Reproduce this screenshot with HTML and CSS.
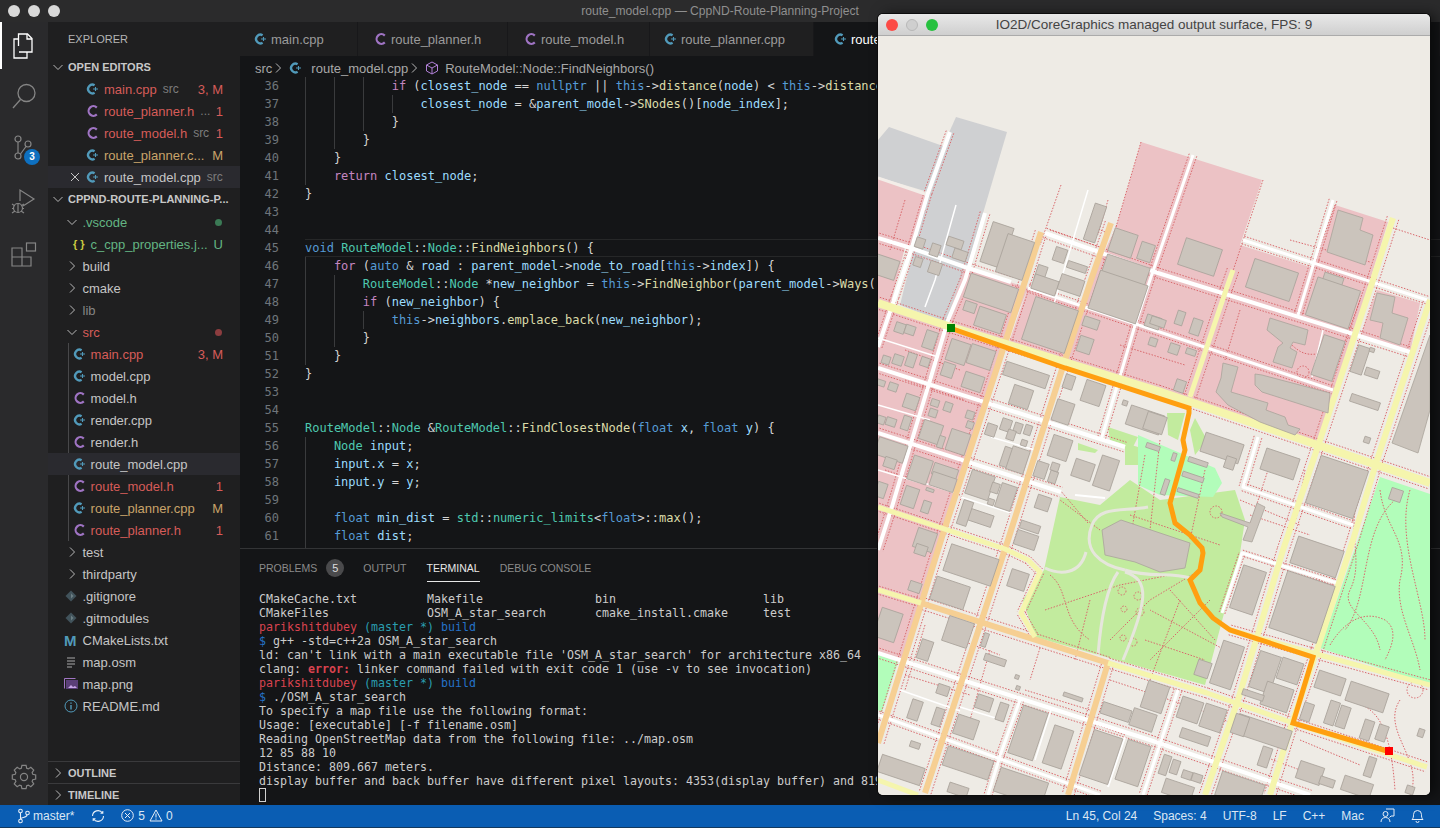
FILE: index.html
```html
<!DOCTYPE html>
<html lang="en">
<head>
  <meta charset="UTF-8">
  <title>route_model.cpp — CppND-Route-Planning-Project</title>
  <link rel="stylesheet" href="styles.css">
</head>
<body>

  <svg class="defs" width="0" height="0">
    <symbol id="i-cpp" viewBox="0 0 14 14">
      <path d="M8.6 3.3A4.3 4.3 0 1 0 8.6 10.7" fill="none" stroke="#519aba" stroke-width="2.4"/>
      <path d="M7 7h5M9.5 5v4" stroke="#519aba" stroke-width="1.1"/>
    </symbol>
    <symbol id="i-h" viewBox="0 0 14 14">
      <path d="M10.8 3.6A4.8 4.8 0 1 0 10.8 10.4" fill="none" stroke="#a074c4" stroke-width="2.2"/>
    </symbol>
    <symbol id="i-git" viewBox="0 0 14 14">
      <path d="M7 1.5 12.5 7 7 12.5 1.5 7Z" fill="#41535b"/>
      <path d="M7 4.5 9.5 7 7 9.5Z" fill="#6d8086"/>
    </symbol>
    <symbol id="i-open" viewBox="0 0 12 12">
      <path d="M1.5 4 6 8.5 10.5 4" fill="none" stroke="#b8b8b8" stroke-width="1"/>
    </symbol>
    <symbol id="i-shut" viewBox="0 0 12 12">
      <path d="M4 1.5 8.5 6 4 10.5" fill="none" stroke="#b8b8b8" stroke-width="1"/>
    </symbol>
  </svg>

  <div class="titlebar">
    <span class="light"></span><span class="light"></span><span class="light"></span>
    <div class="title">route_model.cpp — CppND-Route-Planning-Project</div>
  </div>

  <div class="workbench">

    <nav class="activity">
      <div class="act act-active">
        <svg width="24" height="26" viewBox="0 0 24 26" fill="none" stroke="#fff" stroke-width="1.3"><path d="M6.5 13V1h9l4.5 4.5V19H7"/><path d="M15 1v5h5"/><path d="M6.5 6H2v19h13v-6"/></svg>
      </div>
      <div class="act">
        <svg width="26" height="26" viewBox="0 0 26 26" fill="none" stroke="#858585" stroke-width="1.3"><circle cx="15.5" cy="10" r="8.5"/><path d="M9.5 16.5 2 25"/></svg>
      </div>
      <div class="act">
        <svg width="26" height="28" viewBox="0 0 26 28" fill="none" stroke="#858585" stroke-width="1.2"><circle cx="7" cy="4" r="3"/><circle cx="7" cy="21" r="3"/><circle cx="17" cy="9" r="3"/><path d="M7 7v11M15 11.5 9.5 19"/></svg>
        <span class="act-badge">3</span>
      </div>
      <div class="act">
        <svg width="28" height="28" viewBox="0 0 28 28" fill="none" stroke="#858585" stroke-width="1.2"><path d="M10 13V2l14 9-11 7"/><circle cx="8" cy="20" r="4.5"/><path d="M8 15.500v9M2 16l3 2M2 20.500h2M2 25l3-2M14 16l-3 2M14 20.500h-2M14 25l-3-2"/></svg>
      </div>
      <div class="act">
        <svg width="26" height="26" viewBox="0 0 26 26" fill="none" stroke="#858585" stroke-width="1.2"><rect x="15.500" y="1" width="9" height="8"/><path d="M1 6h10v18H1ZM1 15h19v9h-9"/></svg>
      </div>
      <div class="act act-gear">
        <svg width="26" height="26" viewBox="0 0 24 24" fill="none" stroke="#858585" stroke-width="1.1"><path d="M10.100 1.200H13.900L14.500 3.900 16 4.500 18.300 3 21 5.700 19.500 8 20.100 9.500 22.800 10.100V13.900L20.100 14.500 19.500 16 21 18.300 18.300 21 16 19.500 14.500 20.100 13.900 22.800H10.100L9.500 20.100 8 19.500 5.700 21 3 18.300 4.500 16 3.900 14.500 1.200 13.900V10.100L3.900 9.500 4.500 8 3 5.700 5.700 3 8 4.500 9.500 3.900Z"/><circle cx="12" cy="12" r="3.300"/></svg>
      </div>
    </nav>

    <aside class="sidebar">
      <div class="explorer-head">EXPLORER</div>
      <div class="tree">
        <div class="row section"><svg class="arrow"><use href="#i-open"/></svg>OPEN EDITORS</div>

        <div class="row open-row c-err"><span class="slot"></span><svg class="ico"><use href="#i-cpp"/></svg><span class="name">main.cpp</span><span class="hint">src</span><span class="mark">3, M</span></div>
        <div class="row open-row c-err"><span class="slot"></span><svg class="ico"><use href="#i-h"/></svg><span class="name">route_planner.h</span><span class="hint">...</span><span class="mark">1</span></div>
        <div class="row open-row c-err"><span class="slot"></span><svg class="ico"><use href="#i-h"/></svg><span class="name">route_model.h</span><span class="hint">src</span><span class="mark">1</span></div>
        <div class="row open-row c-mod"><span class="slot"></span><svg class="ico"><use href="#i-cpp"/></svg><span class="name">route_planner.c...</span><span class="mark">M</span></div>
        <div class="row open-row is-selected"><span class="slot"><svg width="12" height="12" viewBox="0 0 12 12" stroke="#c5c5c5" stroke-width="1"><path d="M2 2l8 8M10 2l-8 8"/></svg></span><svg class="ico"><use href="#i-cpp"/></svg><span class="name">route_model.cpp</span><span class="hint">src</span></div>

        <div class="row section"><svg class="arrow"><use href="#i-open"/></svg>CPPND-ROUTE-PLANNING-P...</div>

        <div class="row folder c-new"><svg class="arrow"><use href="#i-open"/></svg><span class="name">.vscode</span><span class="dot dot-new"></span></div>
        <div class="row nested c-new"><span class="ic-json">{ }</span><span class="name">c_cpp_properties.j...</span><span class="mark">U</span></div>
        <div class="row folder"><svg class="arrow"><use href="#i-shut"/></svg><span class="name">build</span></div>
        <div class="row folder"><svg class="arrow"><use href="#i-shut"/></svg><span class="name">cmake</span></div>
        <div class="row folder c-dim"><svg class="arrow"><use href="#i-shut"/></svg><span class="name">lib</span></div>
        <div class="row folder c-err"><svg class="arrow"><use href="#i-open"/></svg><span class="name">src</span><span class="dot dot-err"></span></div>

        <div class="src-group">
          <div class="row nested c-err"><svg class="ico"><use href="#i-cpp"/></svg><span class="name">main.cpp</span><span class="mark">3, M</span></div>
          <div class="row nested"><svg class="ico"><use href="#i-cpp"/></svg><span class="name">model.cpp</span></div>
          <div class="row nested"><svg class="ico"><use href="#i-h"/></svg><span class="name">model.h</span></div>
          <div class="row nested"><svg class="ico"><use href="#i-cpp"/></svg><span class="name">render.cpp</span></div>
          <div class="row nested"><svg class="ico"><use href="#i-h"/></svg><span class="name">render.h</span></div>
          <div class="row nested is-selected"><svg class="ico"><use href="#i-cpp"/></svg><span class="name">route_model.cpp</span></div>
          <div class="row nested c-err"><svg class="ico"><use href="#i-h"/></svg><span class="name">route_model.h</span><span class="mark">1</span></div>
          <div class="row nested c-mod"><svg class="ico"><use href="#i-cpp"/></svg><span class="name">route_planner.cpp</span><span class="mark">M</span></div>
          <div class="row nested c-err"><svg class="ico"><use href="#i-h"/></svg><span class="name">route_planner.h</span><span class="mark">1</span></div>
        </div>

        <div class="row folder"><svg class="arrow"><use href="#i-shut"/></svg><span class="name">test</span></div>
        <div class="row folder"><svg class="arrow"><use href="#i-shut"/></svg><span class="name">thirdparty</span></div>
        <div class="row plain"><svg class="ico"><use href="#i-git"/></svg><span class="name">.gitignore</span></div>
        <div class="row plain"><svg class="ico"><use href="#i-git"/></svg><span class="name">.gitmodules</span></div>
        <div class="row plain"><span class="ic-m">M</span><span class="name">CMakeLists.txt</span></div>
        <div class="row plain"><svg class="ico" viewBox="0 0 14 14" stroke="#a9a9a9" stroke-width="1.1"><path d="M3 3h8M3 6h8M3 9h8M3 12h5"/></svg><span class="name">map.osm</span></div>
        <div class="row plain"><svg class="ico" viewBox="0 0 14 14"><rect x="2" y="3" width="12" height="9" fill="#5b3f78"/><path d="M0.500 1.500h11M0.500 1.500v10" stroke="#a074c4" fill="none"/><path d="M4 11l3-3 2 2 2-1 2 2z" fill="#c9a7e8"/></svg><span class="name">map.png</span></div>
        <div class="row plain"><svg class="ico" viewBox="0 0 14 14" fill="none" stroke="#519aba" stroke-width="1"><circle cx="7" cy="7" r="6"/><path d="M7 6v4.500M7 3.500v1.200" stroke-width="1.400"/></svg><span class="name">README.md</span></div>
      </div>
      <div class="row section section-foot"><svg class="arrow"><use href="#i-shut"/></svg>OUTLINE</div>
      <div class="row section section-foot"><svg class="arrow"><use href="#i-shut"/></svg>TIMELINE</div>
    </aside>

    <main class="content">
      <div class="tabs">
        <div class="tab tab-main"><svg class="ico"><use href="#i-cpp"/></svg>main.cpp</div>
        <div class="tab tab-planner-h"><svg class="ico"><use href="#i-h"/></svg>route_planner.h</div>
        <div class="tab tab-model-h"><svg class="ico"><use href="#i-h"/></svg>route_model.h</div>
        <div class="tab tab-planner-c"><svg class="ico"><use href="#i-cpp"/></svg>route_planner.cpp</div>
        <div class="tab tab-active"><svg class="ico"><use href="#i-cpp"/></svg>route_model.cpp</div>
      </div>

      <div class="crumbs">
        <span>src</span><svg class="crumb-sep"><use href="#i-shut"/></svg>
        <svg class="ico"><use href="#i-cpp"/></svg><span class="crumb-file">route_model.cpp</span><svg class="crumb-sep"><use href="#i-shut"/></svg>
        <svg class="ico" viewBox="0 0 14 14" fill="none" stroke="#b180d7" stroke-width="1"><path d="M7 1l5.500 3v6L7 13l-5.500-3V4ZM1.500 4 7 7l5.500-3M7 7v6"/></svg><span>RouteModel::Node::FindNeighbors()</span>
      </div>

      <div class="editor">
        <div class="ln"><span class="no">36</span><span class="code"><i class="g"></i><i class="g"></i><i class="g"></i><span class="k">if</span> (<span class="v">closest_node</span> == <span class="b">nullptr</span> || <span class="b">this</span>-&gt;<span class="f">distance</span>(<span class="v">node</span>) &lt; <span class="b">this</span>-&gt;<span class="f">distance</span></span></div>
        <div class="ln"><span class="no">37</span><span class="code"><i class="g"></i><i class="g"></i><i class="g"></i><i class="g"></i><span class="v">closest_node</span> = &amp;<span class="v">parent_model</span>-&gt;<span class="f">SNodes</span>()[<span class="v">node_index</span>];</span></div>
        <div class="ln"><span class="no">38</span><span class="code"><i class="g"></i><i class="g"></i><i class="g"></i>}</span></div>
        <div class="ln"><span class="no">39</span><span class="code"><i class="g"></i><i class="g"></i>}</span></div>
        <div class="ln"><span class="no">40</span><span class="code"><i class="g"></i>}</span></div>
        <div class="ln"><span class="no">41</span><span class="code"><i class="g"></i><span class="k">return</span> <span class="v">closest_node</span>;</span></div>
        <div class="ln"><span class="no">42</span><span class="code">}</span></div>
        <div class="ln"><span class="no">43</span><span class="code"></span></div>
        <div class="ln"><span class="no">44</span><span class="code"></span></div>
        <div class="ln is-current"><span class="no">45</span><span class="code"><span class="b">void</span> <span class="t">RouteModel</span>::<span class="t">Node</span>::<span class="f">FindNeighbors</span>() {</span></div>
        <div class="ln"><span class="no">46</span><span class="code"><i class="g"></i><span class="k">for</span> (<span class="b">auto</span> &amp; <span class="v">road</span> : <span class="v">parent_model</span>-&gt;<span class="v">node_to_road</span>[<span class="b">this</span>-&gt;<span class="v">index</span>]) {</span></div>
        <div class="ln"><span class="no">47</span><span class="code"><i class="g"></i><i class="g"></i><span class="t">RouteModel</span>::<span class="t">Node</span> *<span class="v">new_neighbor</span> = <span class="b">this</span>-&gt;<span class="f">FindNeighbor</span>(<span class="v">parent_model</span>-&gt;<span class="f">Ways</span>(</span></div>
        <div class="ln"><span class="no">48</span><span class="code"><i class="g"></i><i class="g"></i><span class="k">if</span> (<span class="v">new_neighbor</span>) {</span></div>
        <div class="ln"><span class="no">49</span><span class="code"><i class="g"></i><i class="g"></i><i class="g"></i><span class="b">this</span>-&gt;<span class="v">neighbors</span>.<span class="f">emplace_back</span>(<span class="v">new_neighbor</span>);</span></div>
        <div class="ln"><span class="no">50</span><span class="code"><i class="g"></i><i class="g"></i>}</span></div>
        <div class="ln"><span class="no">51</span><span class="code"><i class="g"></i>}</span></div>
        <div class="ln"><span class="no">52</span><span class="code">}</span></div>
        <div class="ln"><span class="no">53</span><span class="code"></span></div>
        <div class="ln"><span class="no">54</span><span class="code"></span></div>
        <div class="ln"><span class="no">55</span><span class="code"><span class="t">RouteModel</span>::<span class="t">Node</span> &amp;<span class="t">RouteModel</span>::<span class="f">FindClosestNode</span>(<span class="b">float</span> <span class="v">x</span>, <span class="b">float</span> <span class="v">y</span>) {</span></div>
        <div class="ln"><span class="no">56</span><span class="code"><i class="g"></i><span class="t">Node</span> <span class="v">input</span>;</span></div>
        <div class="ln"><span class="no">57</span><span class="code"><i class="g"></i><span class="v">input</span>.<span class="v">x</span> = <span class="v">x</span>;</span></div>
        <div class="ln"><span class="no">58</span><span class="code"><i class="g"></i><span class="v">input</span>.<span class="v">y</span> = <span class="v">y</span>;</span></div>
        <div class="ln"><span class="no">59</span><span class="code"><i class="g"></i></span></div>
        <div class="ln"><span class="no">60</span><span class="code"><i class="g"></i><span class="b">float</span> <span class="v">min_dist</span> = <span class="t">std</span>::<span class="t">numeric_limits</span>&lt;<span class="b">float</span>&gt;::<span class="f">max</span>();</span></div>
        <div class="ln"><span class="no">61</span><span class="code"><i class="g"></i><span class="b">float</span> <span class="v">dist</span>;</span></div>
        <div class="ln"><span class="no">62</span><span class="code"><i class="g"></i><span class="b">int</span> <span class="v">closest_idx</span>;</span></div>
      </div>

      <section class="panel">
        <div class="panel-tabs">
          <span class="ptab">PROBLEMS</span><span class="count">5</span>
          <span class="ptab">OUTPUT</span>
          <span class="ptab ptab-active">TERMINAL</span>
          <span class="ptab">DEBUG CONSOLE</span>
        </div>
<pre class="terminal">CMakeCache.txt          Makefile                bin                     lib
CMakeFiles              OSM_A_star_search       cmake_install.cmake     test
<span class="t-red">parikshitdubey</span> <span class="t-cyan">(master *)</span> <span class="t-blue">build</span>
<span class="t-blue">$</span> g++ -std=c++2a OSM_A_star_search
ld: can't link with a main executable file 'OSM_A_star_search' for architecture x86_64
clang: <span class="t-err">error:</span> linker command failed with exit code 1 (use -v to see invocation)
<span class="t-red">parikshitdubey</span> <span class="t-cyan">(master *)</span> <span class="t-blue">build</span>
<span class="t-blue">$</span> ./OSM_A_star_search
To specify a map file use the following format:
Usage: [executable] [-f filename.osm]
Reading OpenStreetMap data from the following file: ../map.osm
12 85 88 10
Distance: 809.667 meters.
display buffer and back buffer have different pixel layouts: 4353(display buffer) and 8195
<span class="cursor"></span></pre>
      </section>
    </main>
  </div>

  <footer class="statusbar">
    <svg class="st-first" width="14" height="16" viewBox="0 0 14 16" fill="none" stroke="#e6eef7" stroke-width="1.1"><circle cx="3.500" cy="3" r="1.800"/><circle cx="3.500" cy="13" r="1.800"/><circle cx="10.500" cy="5" r="1.800"/><path d="M3.500 5v6M10 7c0 3-6 2-6.500 4"/></svg>
    <span class="st-branch">master*</span>
    <svg class="st-sync" width="14" height="14" viewBox="0 0 14 14" fill="none" stroke="#e6eef7" stroke-width="1.1"><path d="M1.500 7a5.500 5.500 0 0 1 10-3M12.500 7a5.500 5.500 0 0 1-10 3M9.500 4.300h2.300V2M4.500 9.700H2.200V12"/></svg>
    <svg class="st-err" width="13" height="13" viewBox="0 0 13 13" fill="none" stroke="#e6eef7" stroke-width="1"><circle cx="6.500" cy="6.500" r="5.800"/><path d="M4 4l5 5M9 4l-5 5"/></svg>
    <span class="st-count">5</span>
    <svg class="st-warn" width="14" height="13" viewBox="0 0 14 13" fill="none" stroke="#e6eef7" stroke-width="1"><path d="M7 1l6 11H1ZM7 4.500v4M7 9.500v1.200"/></svg>
    <span class="st-zero">0</span>
    <span class="st-spacer"></span>
    <span>Ln 45, Col 24</span>
    <span>Spaces: 4</span>
    <span>UTF-8</span>
    <span>LF</span>
    <span>C++</span>
    <span>Mac</span>
    <svg width="15" height="15" viewBox="0 0 15 15" fill="none" stroke="#e6eef7" stroke-width="1"><circle cx="5.500" cy="6" r="2.500"/><path d="M1 14c0-3 2-4.500 4.500-4.500S10 11 10 14M6 1h8v7h-3l-1.500 1.500"/></svg>
    <svg width="13" height="15" viewBox="0 0 13 15" fill="none" stroke="#e6eef7" stroke-width="1"><path d="M1 11.500h11c-1.500-1.500-1.500-3-1.500-5a4 4 0 0 0-8 0c0 2 0 3.500-1.500 5ZM5 13a1.500 1.500 0 0 0 3 0"/></svg>
  </footer>

  <div class="viewer">
    <div class="viewer-bar">
      <span class="vlight vlight-red"></span><span class="vlight vlight-off"></span><span class="vlight vlight-green"></span>
      <div class="viewer-title">IO2D/CoreGraphics managed output surface, FPS: 9</div>
    </div>
    <svg id="map" class="map" width="552" height="759" viewBox="878 36 552 759"></svg>
  </div>

  <script src="map.js"></script>
</body>
</html>
```

FILE: styles.css
```css
* {
  box-sizing: border-box;
  margin: 0;
  padding: 0;
}

body {
  width: 1440px;
  height: 828px;
  overflow: hidden;
  display: flex;
  flex-direction: column;
  font-family: "Liberation Sans", sans-serif;
  font-size: 13px;
  background-color: #141517;
  color: #c5c5c5;
}

.defs {
  position: absolute;
}

/* top window bar */
.titlebar {
  height: 22px;
  flex: none;
  display: flex;
  align-items: center;
  gap: 8px;
  padding-left: 8px;
  background-color: #2b2b2c;
}

.light {
  width: 12px;
  height: 12px;
  border-radius: 50%;
  background-color: #d8d8d8;
}

.title {
  flex: 1;
  padding-right: 68px;
  text-align: center;
  font-size: 12.100px;
  color: #8f8f8f;
}

.workbench {
  flex: 1;
  min-height: 0;
  display: flex;
}

/* activity bar */
.activity {
  width: 48px;
  flex: none;
  display: flex;
  flex-direction: column;
  background-color: #2a2a2c;
}

.act {
  position: relative;
  height: 53px;
  flex: none;
  display: flex;
  align-items: center;
  justify-content: center;
}

.act-active {
  height: 47px;
  border-left: 2px solid #fff;
  padding-right: 2px;
}

.act-gear {
  margin-top: auto;
  height: 56px;
}

.act-badge {
  position: absolute;
  left: 24px;
  top: 27px;
  width: 16px;
  height: 16px;
  border-radius: 50%;
  background-color: #0e70c0;
  color: #fff;
  font-size: 10px;
  font-weight: bold;
  line-height: 16px;
  text-align: center;
}

/* explorer */
.sidebar {
  width: 192px;
  flex: none;
  display: flex;
  flex-direction: column;
  background-color: #1f1f20;
}

.explorer-head {
  height: 34px;
  flex: none;
  padding-left: 20px;
  line-height: 34px;
  font-size: 11px;
  color: #b5b5b5;
}

.tree {
  flex: 1;
  min-height: 0;
}

.row {
  height: 22px;
  display: flex;
  align-items: center;
  padding-right: 17px;
  white-space: nowrap;
  color: #c5c5c5;
}

.section {
  padding-left: 4px;
  font-size: 11px;
  font-weight: bold;
  color: #c8c8c8;
}

.section + .folder {
  margin-top: 1px;
}

.section-foot {
  flex: none;
  border-top: 1px solid #3a3a3c;
}

.arrow {
  width: 12px;
  height: 12px;
  flex: none;
  margin-right: 4px;
}

.ico {
  width: 14px;
  height: 14px;
  flex: none;
}

.open-row {
  padding-left: 20px;
}

.slot {
  width: 16px;
  flex: none;
  display: flex;
  padding-left: 1px;
}

.open-row .ico {
  margin: 0 4px 0 2px;
}

.folder {
  padding-left: 18px;
}

.folder .arrow {
  margin-right: 4.500px;
}

.nested {
  padding-left: 25px;
}

.nested .ico,
.ic-json {
  margin-right: 3.600px;
}

.plain {
  padding-left: 16px;
}

.plain .ico,
.ic-m {
  margin-right: 4.500px;
}

.ic-json {
  width: 14px;
  flex: none;
  font-size: 11px;
  font-weight: bold;
  white-space: pre;
  color: #cbcb41;
}

.ic-m {
  width: 14px;
  flex: none;
  font-size: 15px;
  font-weight: bold;
  color: #519aba;
}

.src-group {
  background: linear-gradient(#48484a, #48484a) 20px 0 / 1px 100% no-repeat;
}

.hint {
  margin-left: 6px;
  font-size: 12px;
  color: #7d7d7d;
}

.mark {
  margin-left: auto;
}

.dot {
  width: 7px;
  height: 7px;
  margin-left: auto;
  margin-right: 1px;
  border-radius: 50%;
}

.dot-new {
  background-color: #3b7a55;
}

.dot-err {
  background-color: #8c3d3f;
}

.c-err .name,
.c-err .mark {
  color: #d65c59;
}

.c-mod .name,
.c-mod .mark {
  color: #c9a46a;
}

.c-new .name,
.c-new .mark {
  color: #63b583;
}

.c-dim .name {
  color: #858585;
}

.is-selected {
  background-color: #2a2a2f;
}

/* editor column */
.content {
  flex: 1;
  min-width: 0;
  display: flex;
  flex-direction: column;
  background-color: #141517;
}

.tabs {
  height: 34px;
  flex: none;
  display: flex;
  background-color: #1f1f20;
}

.tab {
  flex: none;
  display: flex;
  align-items: center;
  gap: 3px;
  padding-left: 14px;
  border-right: 1px solid #18181a;
  color: #9b9b9b;
}

.tab-main { width: 118px; }
.tab-planner-h { width: 150px; padding-left: 16px; }
.tab-model-h { width: 142px; padding-left: 16px; }
.tab-planner-c { width: 164px; }

.tab-active {
  flex: 1;
  padding-left: 20px;
  background-color: #141517;
  color: #fff;
}

.crumbs {
  height: 21px;
  flex: none;
  display: flex;
  align-items: center;
  padding: 3px 0 0 15px;
  white-space: nowrap;
  color: #a8a8a8;
}

.crumbs .ico {
  margin-right: 6px;
}

.crumb-file {
  margin-left: 2px;
}

.crumb-sep {
  width: 12px;
  height: 12px;
  flex: none;
  margin-right: 5px;
}

.editor {
  flex: 1;
  min-height: 0;
  overflow: hidden;
  font-family: "DejaVu Sans Mono", monospace;
  font-size: 12px;
  color: #d4d4d4;
}

.ln {
  height: 18px;
  display: flex;
  line-height: 18px;
}

.no {
  width: 39px;
  flex: none;
  margin-right: 26px;
  text-align: right;
  color: #6f757b;
}

.code {
  flex: 1;
  white-space: pre;
}

.g {
  display: inline-block;
  width: 4ch;
  height: 18px;
  vertical-align: top;
  border-left: 1px solid #3a3b3d;
}

.is-current .code {
  border-top: 1px solid #262728;
  border-bottom: 1px solid #262728;
  line-height: 16px;
}

.k { color: #c586c0; }
.b { color: #569cd6; }
.v { color: #9cdcfe; }
.f { color: #dcdcaa; }
.t { color: #4ec9b0; }

/* bottom panel */
.panel {
  height: 257px;
  flex: none;
  border-top: 1px solid #333436;
  background-color: #141517;
}

.panel-tabs {
  height: 33px;
  display: flex;
  align-items: center;
  padding: 4px 0 0 19px;
}

.ptab {
  position: relative;
  margin-right: 20px;
  font-size: 10.500px;
  color: #8b8b8b;
}

.count {
  width: 18px;
  height: 18px;
  margin: 0 19px 0 -11px;
  border-radius: 50%;
  background-color: #4a4a4c;
  color: #ddd;
  font-size: 11px;
  line-height: 18px;
  text-align: center;
}

.ptab-active {
  color: #e7e7e7;
}

.ptab-active::after {
  content: "";
  position: absolute;
  left: 0;
  right: 0;
  bottom: -8px;
  height: 1px;
  background-color: #e7e7e7;
}

.terminal {
  margin-top: 10px;
  padding-left: 19px;
  overflow: hidden;
  font-family: "DejaVu Sans Mono", monospace;
  font-size: 11.630px;
  line-height: 14px;
  color: #cccccc;
}

.t-red { color: #d9434f; }
.t-cyan { color: #2a9db0; }
.t-blue { color: #2472c8; }
.t-err { color: #d9434f; font-weight: bold; }

.cursor {
  display: inline-block;
  width: 7px;
  height: 14px;
  vertical-align: top;
  border: 1px solid #d0d0d0;
}

/* status bar */
.statusbar {
  height: 23px;
  flex: none;
  display: flex;
  align-items: center;
  gap: 16px;
  padding: 0 16px 1px 17px;
  border-bottom: 1px solid #12395f;
  background-color: #0a5db3;
  font-size: 12px;
  color: #dbe7f3;
}

.st-branch {
  margin-left: -14px;
}

.st-sync {
  margin-left: 1px;
}

.st-count,
.st-warn {
  margin-left: -12px;
}

.st-zero {
  margin-left: -13px;
}

.st-spacer {
  flex: 1;
}

/* viewer window floating over the editor */
.viewer {
  position: absolute;
  left: 878px;
  top: 14px;
  width: 552px;
  height: 781px;
  border-radius: 5px;
  overflow: hidden;
  background-color: #eeebe5;
  box-shadow: 0 0 0 1px #0c0c0d, 6px 0 14px rgba(0, 0, 0, 0.55);
}

.viewer-bar {
  height: 22px;
  display: flex;
  align-items: center;
  gap: 8px;
  padding-left: 8px;
  border-bottom: 1px solid #ababab;
  background: linear-gradient(#e8e8e8, #cfcfcf);
}

.vlight {
  width: 12px;
  height: 12px;
  border-radius: 50%;
}

.vlight-red { background-color: #fc4b46; }
.vlight-off { background-color: #cfcfcf; border: 1px solid #b8b8b8; }
.vlight-green { background-color: #27c13f; }

.viewer-title {
  flex: 1;
  padding-right: 68px;
  text-align: center;
  font-size: 13.500px;
  color: #444;
}

.map {
  display: block;
}

.zone-grey { fill: #cfd0d2; }
.zone-pink { fill: #ecc2c5; }
.zone-green { fill: #c2eb9e; }
.zone-mint { fill: #b2fdba; }

.road {
  fill: none;
  stroke-linecap: butt;
  stroke-linejoin: round;
}

.road-w { stroke: #fff; }
.road-p { stroke: #f3ede8; }
.road-o { stroke: #f6cf93; }
.road-y { stroke: #f5f5ad; }

.trail {
  fill: none;
  stroke: #d9686c;
  stroke-width: 1;
  stroke-dasharray: 1.500 1.500;
}

.walk {
  fill: none;
  stroke: #e6e6dc;
  stroke-width: 3;
}

.bld {
  fill: #cbc4bc;
  stroke: #aaa39b;
  stroke-width: 0.800;
}

.route {
  fill: none;
  stroke: #ff9f10;
  stroke-width: 5;
  stroke-linejoin: miter;
}

.pin-start { fill: #008000; }
.pin-end { fill: #ff0000; }
```

FILE: map.js
```js
// Draws the route map. All coordinates are page pixels, the viewBox takes care of the offset.
const svg = document.getElementById("map");
const NS = "http://www.w3.org/2000/svg";
const ANGLE = 18.5;

function add(tag, cls, attrs) {
  const node = document.createElementNS(NS, tag);
  node.setAttribute("class", cls);
  for (const key in attrs) node.setAttribute(key, attrs[key]);
  svg.appendChild(node);
  return node;
}

function pairs(flat) {
  const out = [];
  for (let i = 0; i < flat.length; i += 2) out.push([flat[i], flat[i + 1]]);
  return out;
}

function str(flat) {
  return pairs(flat).map(p => p.join(",")).join(" ");
}

const zones = [
  ["grey", [889,127, 943,146, 928,192, 878,177, 878,140]],
  ["grey", [956,117, 1007,132, 950,325, 900,305, 928,192, 943,146]],
  ["pink", [878,177, 928,195, 910,247, 878,238]],
  ["pink", [878,238, 905,247, 890,306, 878,302]],
  ["pink", [965,267, 1028,288, 1005,345, 945,325]],
  ["pink", [1028,288, 1085,305, 1060,362, 1008,345]],
  ["pink", [878,303, 1005,345, 905,662, 878,652]],
  ["pink", [1116,227, 1141,142, 1262,180, 1240,245, 1313,268, 1335,205, 1388,222, 1320,442, 1060,362, 1091,280]],
  ["pink", [1377,290, 1420,303, 1410,353, 1360,337]],
  ["green", [1108,427, 1138,437, 1133,447, 1110,440]],
  ["green", [1125,443, 1138,447, 1138,465, 1125,465]],
  ["green", [1078,443, 1098,450, 1095,453, 1078,450]],
  ["green", [1167,413, 1185,413, 1178,440, 1168,435]],
  ["green", [1195,418, 1207,440, 1195,455, 1190,430]],
  ["green", [1060,497, 1100,505, 1130,480, 1160,500, 1235,490, 1245,520, 1240,553, 1205,685, 1035,637, 1023,600, 1044,570]],
  ["mint", [1138,435, 1215,468, 1222,483, 1213,497, 1160,495, 1138,485]],
  ["mint", [1380,477, 1430,494, 1430,685, 1320,648]],
  ["mint", [878,655, 898,662, 882,712, 878,710]],
];

// [kind, stroke width, sidewalk offset, points]
const roads = [
  ["p",3,0,[878,178, 928,195]],
  ["w",4,5,[878,238, 911,248, 965,267, 1011,282]],
  ["w",4,5,[1045,233, 1158,273, 1350,333, 1410,352]],
  ["w",3,4,[1243,240, 1427,300]],
  ["w",3,4,[1028,288, 1333,390]],
  ["w",4,5,[878,368, 1125,447]],
  ["w",1.5,0,[878,338, 938,357]],
  ["w",4,5,[878,433, 1061,492]],
  ["w",4,5,[878,653, 1150,740, 1310,795]],
  ["w",3,4,[878,715, 1100,795]],
  ["w",4,4,[950,132, 928,193, 911,250, 895,297, 878,347]],
  ["w",1.5,0,[956,205, 935,280, 925,307]],
  ["w",4,5,[985,213, 965,280, 948,320, 928,387, 911,443, 891,510, 878,550]],
  ["w",1.5,0,[1088,190, 1061,280, 1048,325]],
  ["w",3,4,[1193,155, 1150,280, 1136,322, 1121,373, 1101,440]],
  ["w",3,4,[1333,200, 1298,315]],
  ["w",1.5,0,[1323,330, 1312,377]],
  ["w",3,4,[1258,437, 1243,487, 1353,525]],
  ["w",3,3,[1222,613, 1242,553, 1337,583]],
  ["w",3,4,[1178,690, 1143,795]],
  ["w",3,4,[1021,697, 1001,753, 988,795]],
  ["w",1.5,0,[1051,710, 1035,760]],
  ["w",2,0,[1125,737, 1108,787]],
  ["w",1.5,0,[878,405, 930,420]],
  ["w",1.5,0,[878,470, 921,483]],
  ["w",1.5,0,[915,480, 955,493]],
  ["w",1.5,0,[961,497, 1011,513]],
  ["w",1.5,0,[991,437, 1035,450]],
  ["w",1.5,0,[900,690, 960,711]],
  ["w",1.5,0,[960,707, 1002,720]],
  ["w",2,0,[1075,495, 1105,498]],
  ["o",6,6,[1041,232, 1005,343, 941,540, 878,743]],
  ["o",6,6,[1111,223, 1091,280, 1065,360, 1008,540, 925,793]],
  ["o",6,6,[921,603, 1108,663, 1068,795]],
  ["y",5,4,[878,507, 1005,549, 1028,560, 1040,572, 1021,613, 1035,637]],
  ["y",5,4,[878,590, 921,603]],
  ["y",5,5,[1108,663, 1207,693, 1293,723, 1427,767]],
  ["y",5,5,[1230,630, 1320,655, 1430,685]],
  ["y",5,0,[878,780, 918,795]],
  ["y",6,6,[1393,218, 1373,280, 1320,440, 1283,550, 1260,627, 1237,703, 1205,795]],
  ["y",6,6,[1430,300, 1377,460, 1353,540, 1317,650, 1293,720, 1270,795]],
  ["y",5,6,[1233,270, 1227,287, 1190,397]],
  ["y",8,6,[878,303, 945,325, 1158,391, 1430,483]],
];

// dotted footpaths that don't follow a road
const trails = [
  "M1263,180L1230,280", "M1141,142L1116,227", "M1061,185L1040,245", "M1108,200L1098,235",
  "M1335,205L1312,270", "M1393,228L1430,240", "M1290,240L1370,262", "M1105,232L1090,225",
  "M1050,230L1100,247", "M1012,285L1042,295", "M905,200L890,250", "M925,210L905,260",
  "M1050,330L1075,340", "M1120,345L1185,365", "M1240,310L1225,360", "M1360,300L1340,355",
  "M1285,340C1295,345 1300,360 1325,352", "M905,350L960,370", "M905,380L965,400", "M885,470L960,495",
  "M1060,490L1088,523", "M1050,575C1070,590 1060,620 1090,640", "M1045,610L1120,585L1170,575",
  "M1110,640L1150,600L1200,570", "M1170,590L1215,640", "M1210,600L1150,660", "M1100,530L1060,500",
  "M1145,455L1130,540", "M1205,470L1190,540", "M1160,440L1150,530", "M1130,515L1220,545",
  "M1240,500L1300,525", "M1268,470L1250,525", "M1305,470L1296,520", "M1250,515L1310,535",
  "M1360,490C1345,530 1365,560 1350,590C1340,610 1375,620 1380,650",
  "M1380,490C1385,530 1410,540 1400,580C1395,610 1415,640 1420,670",
  "M1330,645C1345,620 1365,610 1385,620C1400,630 1390,650 1385,660",
  "M1410,490C1395,540 1425,600 1425,640", "M1395,500C1360,530 1370,600 1345,630",
  "M1345,700C1375,705 1390,720 1395,790", "M1400,700C1380,730 1425,760 1410,795",
  "M1180,600L1150,680", "M1225,650L1150,610", "M1145,640L1205,660", "M1300,570L1340,590",
  "M1025,690L1090,710", "M1090,600L1075,660", "M1040,648L1030,680", "M1110,680L1200,710",
  "M1200,710L1260,735", "M1070,715L1125,735", "M960,640L1000,655", "M990,650L970,720",
  "M925,625L905,690", "M905,675L970,695", "M1300,740L1360,765", "M1260,755L1300,770",
];

const rings = [
  [1122,591,4], [1138,596,4], [1124,609,3], [1140,612,4], [1123,638,3], [1133,642,4],
  [1216,512,6], [1303,372,6], [1415,690,8],
];

const walks = [
  "M1148,507C1125,512 1100,505 1092,525C1082,550 1100,565 1125,570",
  "M1045,568C1060,575 1080,575 1086,552",
  "M1118,572C1105,590 1100,630 1098,655",
  "M1125,572C1150,580 1148,600 1123,660",
  "M1125,570C1150,578 1170,572 1190,578",
];

// cx, cy, w, h of street aligned buildings
const blocks = [
  997,245,22,42, 1015,257,28,40, 1060,255,12,14, 1077,267,20,7, 1095,223,12,38,
  1123,243,24,24, 1146,252,14,18, 1125,273,45,25, 885,267,25,20, 1041,273,10,15,
  920,243,9,10, 935,250,9,12, 955,243,16,9, 960,255,14,10, 918,262,8,9, 935,268,12,12,
  1200,257,38,28, 1272,280,46,30, 1333,280,20,10,
  991,293,50,25, 1045,285,25,15, 1071,285,24,16, 1118,297,50,40, 1153,322,15,12,
  990,320,28,20, 970,307,12,10, 1050,325,45,45, 1091,323,16,10, 1085,345,14,16,
  958,352,20,22, 981,357,25,20, 948,370,12,14, 973,382,20,16,
  1026,375,45,14, 1021,397,20,20, 1069,382,10,14, 1093,393,20,22, 1063,412,18,22,
  1125,403,5,5, 1145,420,35,20,
  900,328,10,10, 910,330,10,9, 930,340,12,18, 886,360,8,8, 898,360,10,10, 911,360,9,14, 925,362,9,9,
  881,383,8,6, 893,387,9,8, 911,402,14,14, 933,413,8,8, 935,403,8,7, 948,407,8,9, 970,415,8,8, 970,425,7,7,
  931,432,20,20, 958,442,20,22, 941,442,6,12, 906,423,8,14, 891,422,10,8, 881,420,8,8,
  891,450,30,18, 890,463,12,10, 920,470,20,25, 945,472,25,12, 943,482,25,14,
  910,497,14,20, 926,507,8,12, 930,490,8,3, 881,490,10,15,
  991,430,10,12, 1006,425,10,12, 1018,428,8,10, 1011,435,8,10, 1028,430,7,10, 1024,443,6,6,
  1006,457,8,20, 1018,460,18,24, 1060,448,20,22,
  980,485,24,25, 995,488,8,10, 1006,497,16,25, 991,502,6,6,
  1041,470,12,16, 1053,477,8,12, 1055,467,8,8, 1043,503,14,14,
  978,517,30,12, 965,513,10,25, 1030,527,20,8, 1026,540,22,15, 925,540,20,20,
  1083,470,20,18, 1106,473,18,32,
  1158,322,15,8, 1180,318,8,14, 1196,327,10,16, 1153,342,8,8, 1174,349,10,10, 1191,352,10,6, 1180,386,10,12,
  1328,358,22,42, 1333,303,45,40, 1360,360,12,28, 1372,373,14,8, 1372,350,5,4, 1365,402,30,8, 1367,440,6,6,
  1222,448,40,20, 1230,463,10,12, 1280,464,35,22, 1337,487,50,50, 1396,495,12,12, 1155,423,20,18,
  1198,462,20,5, 1193,477,22,5, 1188,493,22,4, 1153,447,14,5, 1174,457,4,8, 1165,487,5,16,
  1317,557,48,28, 1302,607,50,60, 1248,590,24,45,
  1203,669,14,16, 1227,665,22,45, 1265,672,22,38, 1290,671,22,22,
  1155,697,22,28, 1190,710,22,22, 1213,718,22,24, 1263,732,55,20, 1240,725,14,20,
  1277,697,28,24, 1253,695,22,6, 1330,683,28,18, 1367,697,40,20, 1307,712,10,18,
  1332,713,10,24, 1343,717,10,22, 1367,730,10,20, 1382,733,10,16, 1370,767,8,20, 1421,733,6,8,
  1310,773,25,18, 1327,782,15,8, 1357,787,30,15, 1265,757,10,20, 1165,765,8,20, 1175,767,8,14,
  1187,775,10,8, 1197,778,10,8, 1178,790,30,15, 1240,790,45,25, 1195,737,30,10, 1410,790,8,8,
  971,565,50,28, 950,593,35,24, 1018,580,18,18, 958,632,26,26, 925,650,12,20, 985,640,5,14, 995,660,22,7,
  943,690,12,10, 915,710,11,20, 938,717,9,18, 984,703,16,14, 1002,712,9,18, 966,727,22,20,
  1028,733,26,50, 1058,747,20,40, 1073,697,20,4, 1116,712,30,12, 1143,720,24,18,
  1101,757,30,48, 1133,763,24,42, 901,770,45,18, 915,745,10,6, 968,763,48,20, 958,790,20,10, 1021,787,50,25,
  888,625,22,30, 915,587,12,10, 921,550,12,10, 1017,677,4,4, 1018,688,4,4,
];

// buildings with an outline of their own
const shapes = [
  [1102,530, 1121,520, 1190,543, 1185,568, 1160,572, 1135,562, 1105,555],
  [1223,363, 1238,367, 1231,392, 1268,403, 1266,410, 1285,417, 1288,425, 1300,429, 1295,435, 1260,422, 1243,413, 1228,405, 1216,392, 1221,378],
  [1255,374, 1262,375, 1330,393, 1328,413, 1262,392, 1255,385],
  [1338,210, 1363,218, 1360,230, 1373,235, 1365,265, 1327,252],
  [1377,293, 1395,297, 1392,313, 1408,318, 1400,345, 1380,338, 1383,323, 1370,320],
  [1267,330, 1270,318, 1308,330, 1305,345, 1293,342, 1290,348, 1297,352, 1292,368, 1273,362, 1278,347, 1283,343],
  [1392,443, 1418,453, 1430,410, 1430,335],
  [1220,513, 1250,523, 1257,503, 1265,507, 1252,542, 1243,540, 1248,527, 1222,517],
];

const route = [
  950,328, 1065,368, 1189,408, 1189,413, 1183,440, 1185,450, 1170,503, 1175,523, 1190,535, 1202,548,
  1203,553, 1200,570, 1190,580, 1200,603, 1213,618, 1230,630, 1313,657, 1293,723, 1387,751,
];

add("rect", "", { x: 878, y: 36, width: 552, height: 759, fill: "#eeebe5" });

zones.forEach(z => add("polygon", "zone-" + z[0], { points: str(z[1]) }));

function sidewalk(pts, off) {
  for (let i = 0; i + 1 < pts.length; i++) {
    const [x1, y1] = pts[i];
    const [x2, y2] = pts[i + 1];
    const len = Math.hypot(x2 - x1, y2 - y1);
    const nx = (y1 - y2) / len * off;
    const ny = (x2 - x1) / len * off;
    [1, -1].forEach(side => {
      add("line", "trail", {
        x1: x1 + nx * side, y1: y1 + ny * side,
        x2: x2 + nx * side, y2: y2 + ny * side,
      });
    });
  }
}

trails.forEach(d => add("path", "trail", { d }));
rings.forEach(r => add("circle", "trail", { cx: r[0], cy: r[1], r: r[2] }));
walks.forEach(d => add("path", "walk", { d }));
roads.forEach(r => {
  if (r[2]) sidewalk(pairs(r[3]), r[2]);
});
roads.forEach(r => {
  add("polyline", "road road-" + r[0], { points: str(r[3]), "stroke-width": r[1] });
});

for (let i = 0; i < blocks.length; i += 4) {
  const [cx, cy, w, h] = blocks.slice(i, i + 4);
  add("rect", "bld", {
    x: -w / 2, y: -h / 2, width: w, height: h,
    transform: `translate(${cx} ${cy}) rotate(${ANGLE})`,
  });
}
shapes.forEach(s => add("polygon", "bld", { points: str(s) }));

add("polyline", "route", { points: str(route) });
add("rect", "pin-start", { x: 947, y: 324, width: 8, height: 8 });
add("rect", "pin-end", { x: 1385, y: 747, width: 8, height: 8 });
```
